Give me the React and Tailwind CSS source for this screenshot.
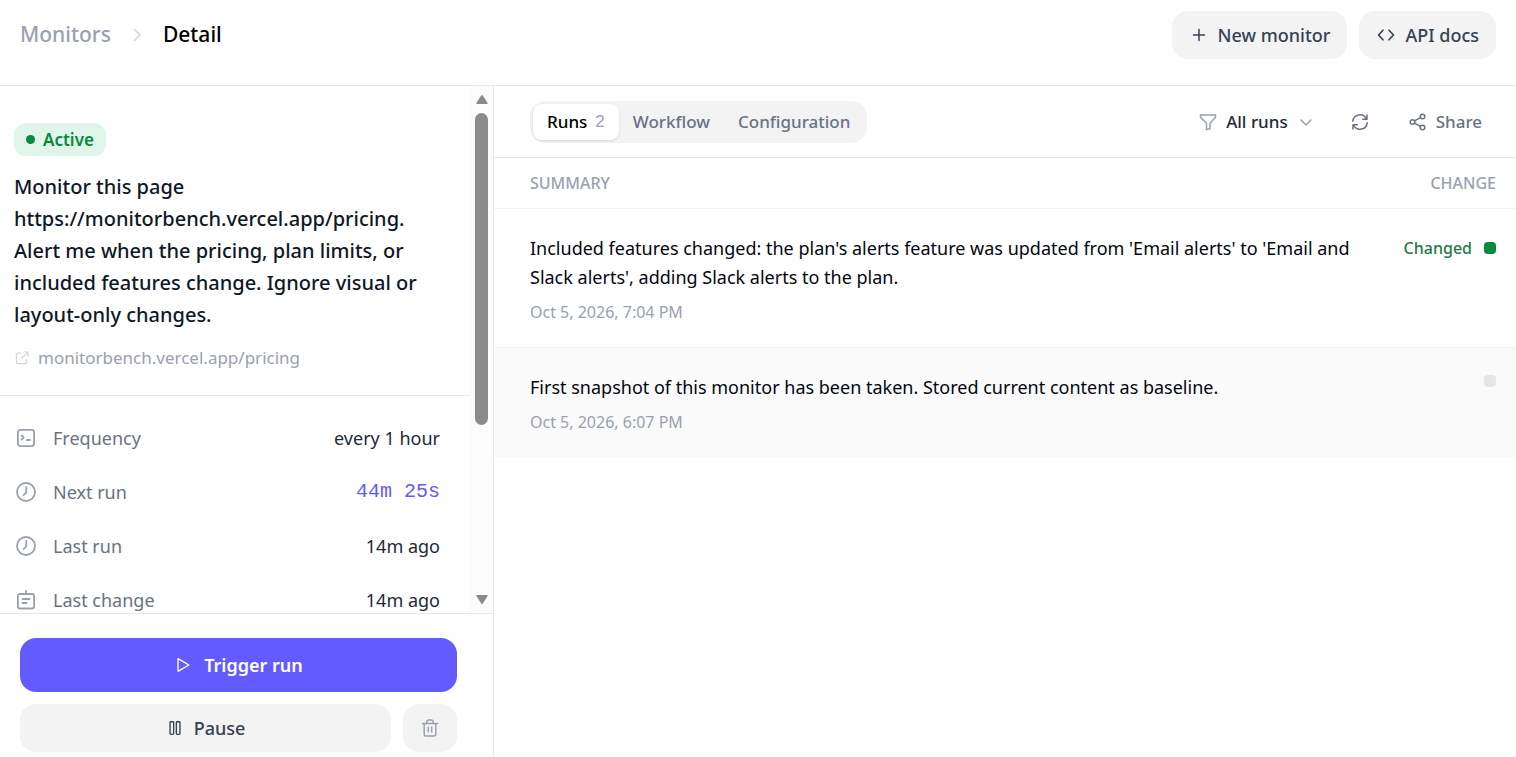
import React, { useState } from 'react';

const Icon = ({ className, children, viewBox = '0 0 20 20', strokeWidth = 1.5 }) => (
  <svg
    className={className}
    viewBox={viewBox}
    fill="none"
    stroke="currentColor"
    strokeWidth={strokeWidth}
    strokeLinecap="round"
    strokeLinejoin="round"
    aria-hidden="true"
  >
    {children}
  </svg>
);

const ChevronRightIcon = ({ className }) => (
  <Icon className={className}><path d="M7.500 4.500 13 10l-5.500 5.500" /></Icon>
);

const ChevronDownIcon = ({ className }) => (
  <Icon className={className}><path d="M5 8l5 5 5-5" /></Icon>
);

const PlusIcon = ({ className }) => (
  <Icon className={className}><path d="M10 4.500v11M4.500 10h11" /></Icon>
);

const CodeIcon = ({ className }) => (
  <Icon className={className} strokeWidth={1.6}><path d="M7 5.200 2.500 10l4.500 4.800M13 5.200 17.500 10l-4.500 4.800" /></Icon>
);

const FilterIcon = ({ className }) => (
  <Icon className={className}>
    <path d="M2.500 3h15v2.200l-5.500 6v5.500L8.500 17.500v-6.300l-6-6z" />
  </Icon>
);

const RefreshIcon = ({ className }) => (
  <Icon className={className}>
    <path d="M2.800 9.200A7.200 7.200 0 0 1 16.500 7M17 3v4.200h-4.200" />
    <path d="M17.200 10.800A7.200 7.200 0 0 1 3.500 13M3 17v-4.200h4.200" />
  </Icon>
);

const ShareIcon = ({ className }) => (
  <Icon className={className}>
    <circle cx="4.500" cy="10" r="2.300" />
    <circle cx="14.500" cy="4.500" r="2.300" />
    <circle cx="14.500" cy="15.500" r="2.300" />
    <path d="M6.600 8.900l5.800-3.200M6.600 11.200l5.800 3.100" />
  </Icon>
);

const ExternalIcon = ({ className }) => (
  <Icon className={className}>
    <path d="M8 4H5.500A2.500 2.500 0 0 0 3 6.500v8A2.500 2.500 0 0 0 5.500 17h8a2.500 2.500 0 0 0 2.500-2.500V12" />
    <path d="M12 2.500h5.500V8M17.500 2.500 9.500 10.500" />
  </Icon>
);

const TerminalIcon = ({ className }) => (
  <Icon className={className} strokeWidth={1.8}>
    <rect x="1.900" y="1.900" width="16.200" height="16.200" rx="2.500" />
    <path d="M5.700 7.500l2 2-2 2M10.800 12h3.200" />
  </Icon>
);

const ClockIcon = ({ className }) => (
  <Icon className={className} strokeWidth={1.8}>
    <circle cx="10" cy="10" r="9" />
    <path d="M10.300 5v4.500c0 1.500-1 2.500-2.800 3.500" />
  </Icon>
);

const ChangeIcon = ({ className }) => (
  <Icon className={className} strokeWidth={1.8}>
    <rect x="1.900" y="4" width="16.200" height="14.500" rx="2" />
    <path d="M10 4V.9M6.500 9h7M6.500 13h4" />
  </Icon>
);

const PlayIcon = ({ className }) => (
  <Icon className={className}><path d="M4.500 3v14L16.500 10z" /></Icon>
);

const PauseIcon = ({ className }) => (
  <Icon className={className}>
    <rect x="4.500" y="3" width="4" height="14" rx="0.800" />
    <rect x="11.500" y="3" width="4" height="14" rx="0.800" />
  </Icon>
);

const TrashIcon = ({ className }) => (
  <Icon className={className}>
    <path d="M2.500 5.500h15M4.200 5.500v10.700A1.800 1.800 0 0 0 6 18h8a1.800 1.800 0 0 0 1.800-1.800V5.500" />
    <path d="M6.800 5.500V4a2 2 0 0 1 2-2h2.400a2 2 0 0 1 2 2v1.500M8.300 9v5M11.700 9v5" />
  </Icon>
);

const details = [
  { label: 'Frequency', value: 'every 1 hour', icon: TerminalIcon },
  { label: 'Next run', value: '44m 25s', icon: ClockIcon, countdown: true },
  { label: 'Last run', value: '14m ago', icon: ClockIcon },
  { label: 'Last change', value: '14m ago', icon: ChangeIcon }
];

const tabs = [
  { id: 'runs', label: 'Runs', count: 2 },
  { id: 'workflow', label: 'Workflow' },
  { id: 'configuration', label: 'Configuration' }
];

const runs = [
  {
    id: 2,
    summary:
      "Included features changed: the plan's alerts feature was updated from 'Email alerts' to 'Email and Slack alerts', adding Slack alerts to the plan.",
    date: 'Oct 5, 2026, 7:04 PM',
    changed: true
  },
  {
    id: 1,
    summary: 'First snapshot of this monitor has been taken. Stored current content as baseline.',
    date: 'Oct 5, 2026, 6:07 PM',
    changed: false
  }
];

const Header = () => (
  <header className="flex shrink-0 items-start justify-between border-b border-[#e8e8e8] px-5 pt-[11px] pb-[26px]">
    <nav className="flex h-12 items-center gap-4 text-[21px] font-medium">
      <a href="#monitors" className="text-gray-400">Monitors</a>
      <ChevronRightIcon className="size-5 text-gray-300" />
      <span className="text-black">Detail</span>
    </nav>
    <div className="flex gap-3 text-lg font-medium text-gray-700">
      <button type="button" className="flex h-12 items-center gap-[9px] rounded-2xl bg-[#f3f3f3] px-[17px]">
        <PlusIcon className="size-5" />
        New monitor
      </button>
      <button type="button" className="flex h-12 items-center gap-[9px] rounded-2xl bg-[#f3f3f3] px-[17px]">
        <CodeIcon className="size-5" />
        API docs
      </button>
    </div>
  </header>
);

const ScrollTrack = () => (
  <div className="flex w-[23px] shrink-0 flex-col items-center justify-between bg-[#fcfcfc] py-2" aria-hidden="true">
    <svg className="h-3 w-3 text-[#8b8b8b]" viewBox="0 0 12 12" fill="currentColor">
      <path d="M5.200 1.500 0.400 9a.7.7 0 0 0 .6 1h10a.7.7 0 0 0 .6-1L6.800 1.500a1 1 0 0 0-1.600 0z" />
    </svg>
    <div className="mt-[7px] flex w-[13px] flex-1 flex-col">
      <div className="h-[65%] rounded-full bg-[#8b8b8b]" />
    </div>
    <svg className="h-3 w-3 text-[#8b8b8b]" viewBox="0 0 12 12" fill="currentColor">
      <path d="M5.200 10.500 0.400 3A.7.700 0 0 1 1 2h10a.7.700 0 0 1 .6 1L6.800 10.500a1 1 0 0 1-1.600 0z" />
    </svg>
  </div>
);

const Sidebar = () => (
  <aside className="flex w-[494px] shrink-0 flex-col border-r border-[#e8e8e8]">
    <div className="flex min-h-0 flex-1">
      <div className="min-w-0 flex-1 overflow-hidden">
        <section className="border-b border-[#e8e8e8] px-[14px] pt-[37px] pb-[25px]">
          <span className="flex h-[33px] w-fit items-center gap-2 rounded-xl bg-[#e0f5e9] px-3 text-[17px] font-semibold text-[#078a3c]">
            <span className="size-[9px] rounded-full bg-[#078a3c]" />
            Active
          </span>
          <h1 className="mt-[15px] w-[410px] text-xl leading-[32px] font-medium text-gray-900">
            Monitor this page https://monitorbench.vercel.app/pricing. Alert me when the pricing, plan limits,
            or included features change. Ignore visual or layout-only changes.
          </h1>
          <a href="https://monitorbench.vercel.app/pricing" className="mt-[15px] flex items-center gap-2 text-[17px] leading-6 text-gray-400">
            <ExternalIcon className="size-4 text-gray-300" />
            monitorbench.vercel.app/pricing
          </a>
        </section>
        <dl className="pt-[15px] pr-[30px] pl-4">
          {details.map(({ label, value, icon: DetailIcon, countdown }) => (
            <div key={label} className="flex h-[54px] items-center text-lg">
              <DetailIcon className="mr-[17px] size-5 text-gray-400" />
              <dt className="flex-1 text-gray-500">{label}</dt>
              <dd className={countdown ? "font-['Liberation_Mono',monospace] text-xl text-[#635bff]" : 'text-gray-800'}>
                {value}
              </dd>
            </div>
          ))}
        </dl>
      </div>
      <ScrollTrack />
    </div>
    <footer className="shrink-0 border-t border-[#e8e8e8] pt-6 pr-9 pb-[5px] pl-5 text-lg">
      <button type="button" className="flex h-[54px] w-full items-center justify-center gap-3 rounded-2xl bg-[#635bff] font-semibold text-white">
        <PlayIcon className="size-[18px]" />
        Trigger run
      </button>
      <div className="mt-3 flex gap-3">
        <button type="button" className="flex h-12 flex-1 items-center justify-center gap-[10px] rounded-2xl bg-[#f3f3f3] font-medium text-gray-700">
          <PauseIcon className="size-[18px]" />
          Pause
        </button>
        <button type="button" aria-label="Delete monitor" className="flex h-12 w-[54px] items-center justify-center rounded-2xl bg-[#f3f3f3] text-gray-400">
          <TrashIcon className="size-5" />
        </button>
      </div>
    </footer>
  </aside>
);

const Toolbar = ({ activeTab, onTabChange }) => (
  <div className="flex items-center justify-between border-b border-[#e8e8e8] pt-[15px] pr-[34px] pb-[14px] pl-9">
    <div role="tablist" className="flex h-[42px] items-center rounded-2xl bg-[#f3f3f3] p-[3px] text-[17px]">
      {tabs.map((tab) => (
        <button
          key={tab.id}
          type="button"
          role="tab"
          aria-selected={tab.id === activeTab}
          onClick={() => onTabChange(tab.id)}
          className={
            tab.id === activeTab
              ? 'flex h-9 items-center gap-2 rounded-lg bg-white px-[14px] font-medium text-black shadow-sm'
              : 'flex h-9 items-center px-[14px] font-medium text-gray-500'
          }
        >
          {tab.label}
          {tab.count && <span className="font-['Liberation_Sans',sans-serif] text-gray-400">{tab.count}</span>}
        </button>
      ))}
    </div>
    <div className="flex items-center text-[17px] font-medium">
      <label className="flex items-center gap-2 text-gray-400">
        <FilterIcon className="size-5" />
        <select aria-label="Filter runs" defaultValue="all" className="field-sizing-content appearance-none bg-transparent text-gray-800">
          <option value="all">All runs</option>
          <option value="changed">Changed</option>
        </select>
        <ChevronDownIcon className="size-5" />
      </label>
      <button type="button" aria-label="Refresh" className="ml-[34px] text-gray-500">
        <RefreshIcon className="size-5" />
      </button>
      <button type="button" className="ml-[38px] flex items-center gap-2 text-gray-500">
        <ShareIcon className="size-5" />
        Share
      </button>
    </div>
  </div>
);

const RunsTable = () => (
  <table className="w-full text-left">
    <thead>
      <tr className="h-[50px] border-b border-[#f3f3f3] text-base text-gray-400">
        <th className="pl-9 font-medium">SUMMARY</th>
        <th className="w-[140px] pr-5 text-right font-medium">CHANGE</th>
      </tr>
    </thead>
    <tbody>
      {runs.map((run) => (
        <tr key={run.id} className={run.changed ? 'border-b border-[#f3f3f3] align-top' : 'bg-[#fafafa] align-top'}>
          <td className="pt-[25px] pb-[23px] pl-9">
            <p className="text-lg leading-[29px] text-gray-950">{run.summary}</p>
            <p className="mt-2 text-base leading-6 text-gray-400">{run.date}</p>
          </td>
          <td className="py-[27px] pr-5">
            <div className="flex items-center justify-end gap-3 text-base font-medium text-[#1d7a46]">
              {run.changed && 'Changed'}
              <span className={run.changed ? 'size-3 rounded-sm bg-[#078a3c]' : 'size-3 rounded-sm bg-[#e5e5e5]'} />
            </div>
          </td>
        </tr>
      ))}
    </tbody>
  </table>
);

const App = () => {
  const [activeTab, setActiveTab] = useState('runs');

  return (
    <div className="flex h-screen flex-col bg-white font-['Noto_Sans','Open_Sans',sans-serif]">
      <Header />
      <div className="flex min-h-0 flex-1">
        <Sidebar />
        <main className="min-w-0 flex-1">
          <Toolbar activeTab={activeTab} onTabChange={setActiveTab} />
          {activeTab === 'runs' && <RunsTable />}
        </main>
      </div>
    </div>
  );
};

export default App;
